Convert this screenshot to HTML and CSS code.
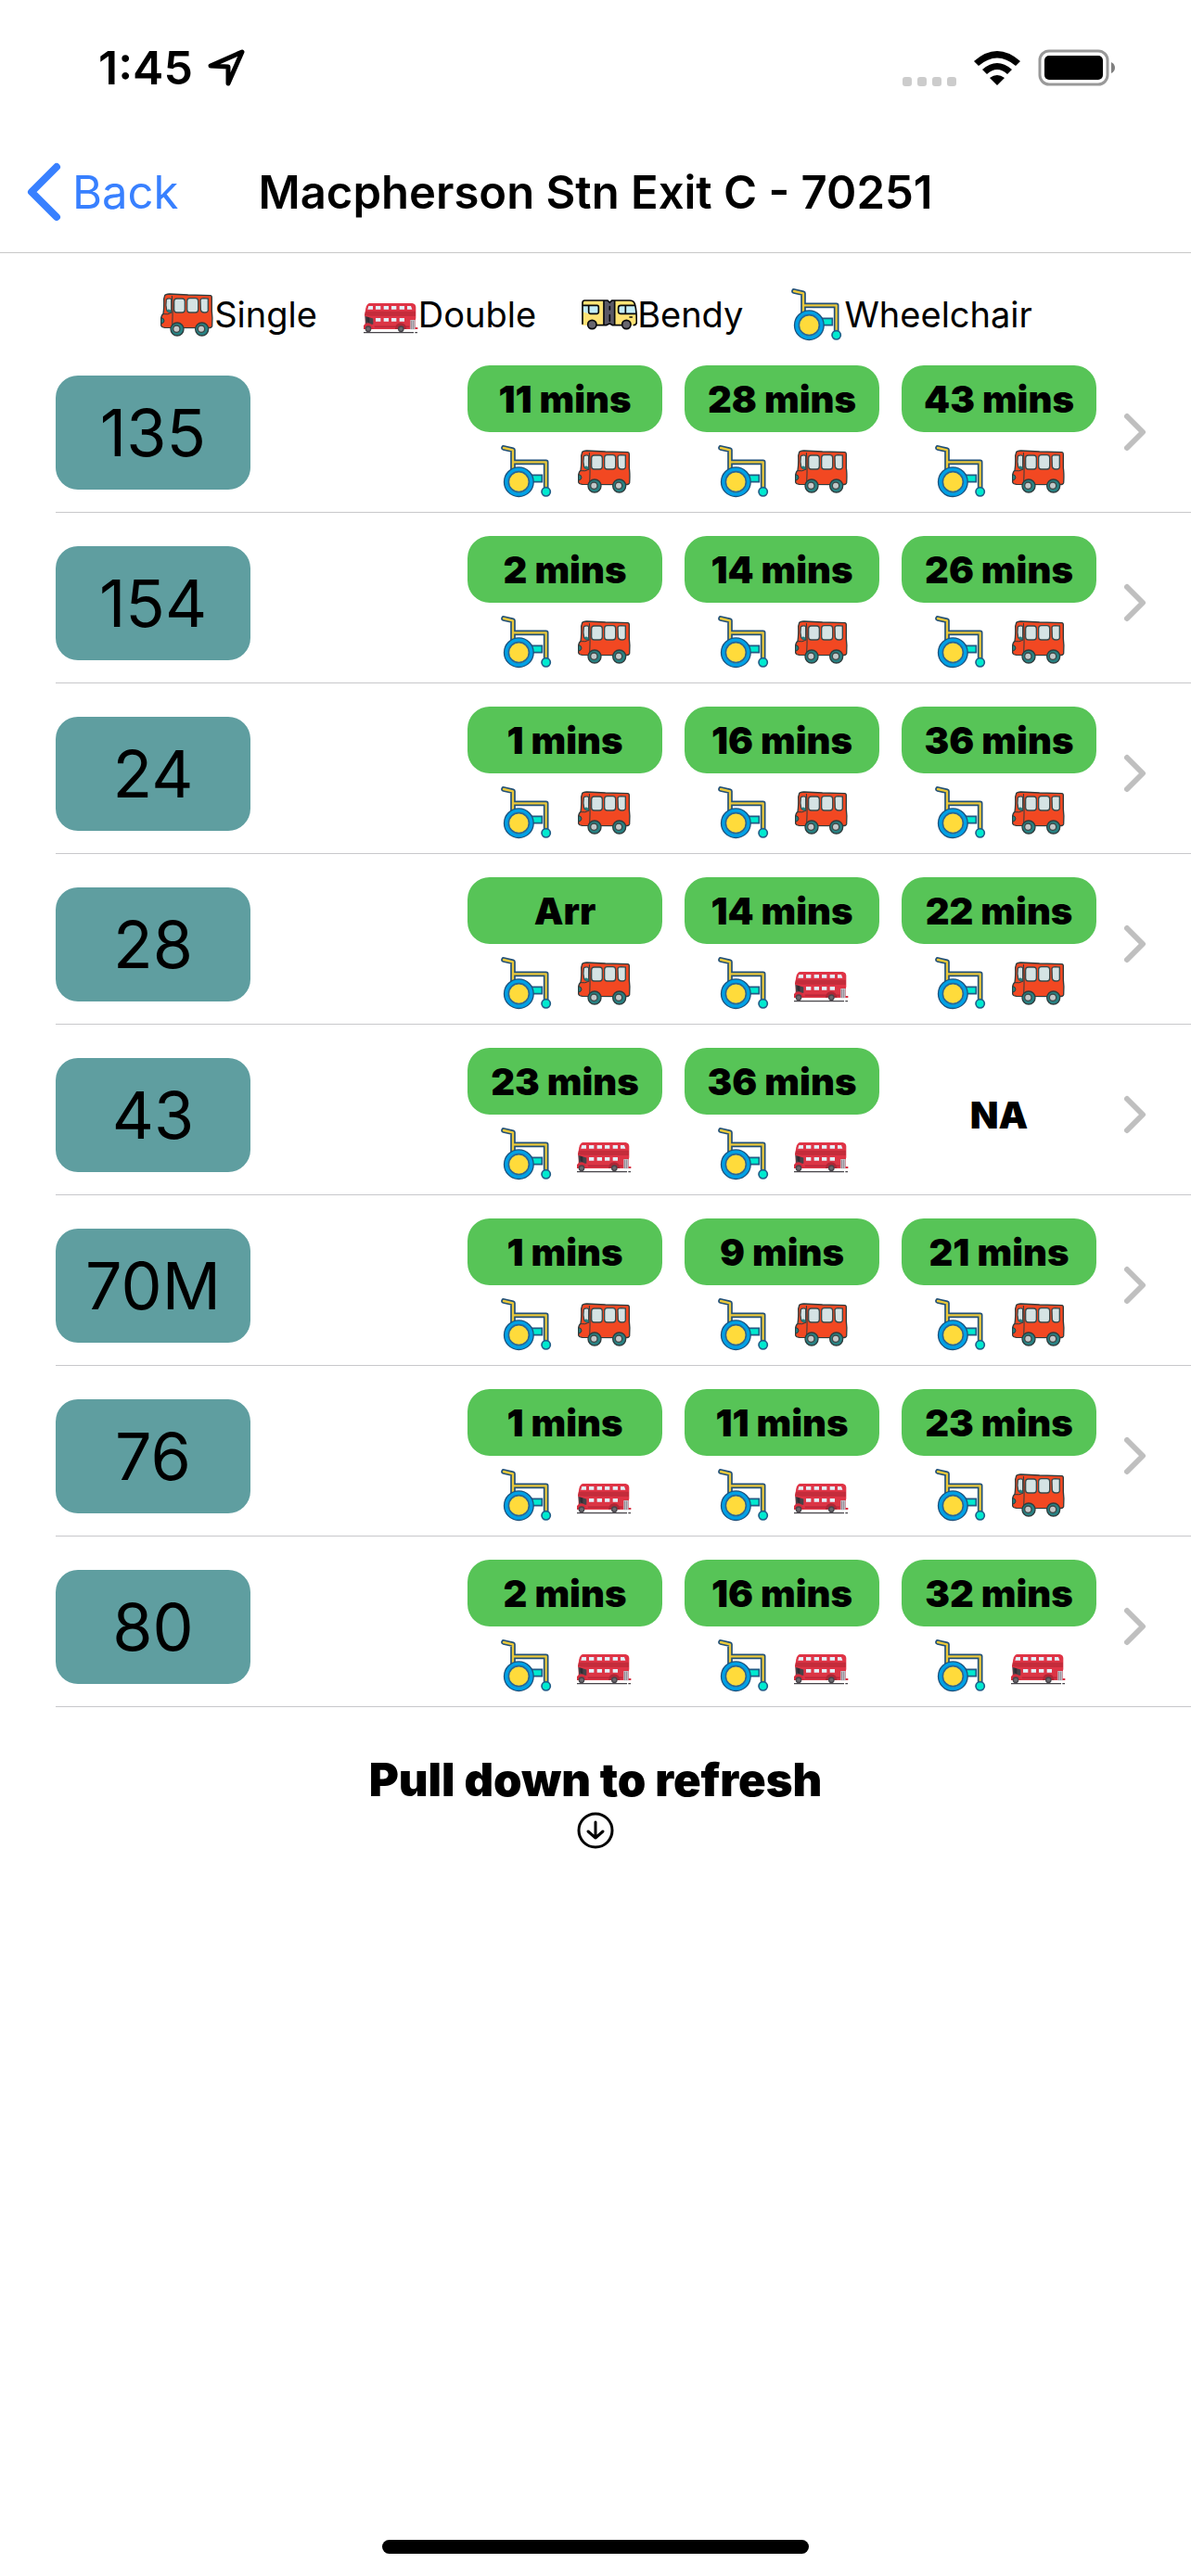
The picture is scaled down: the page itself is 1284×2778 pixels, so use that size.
FILE: index.html
```html
<!DOCTYPE html>
<html lang="en">
<head>
<meta charset="utf-8">
<meta name="viewport" content="width=device-width">
<title>Macpherson Stn Exit C - 70251</title>
<link rel="stylesheet" href="styles.css">
</head>
<body>
<svg class="sprite" aria-hidden="true">
  <symbol id="single" viewBox="0 0 180 180">
    <path d="M20 29Q22 25 35 24L95 27L168 29Q173 30 172 40L172 80Q175 100 173 128Q172 134 160 134L20 133Q9 132 8 126V104Q9 92 15 88Q18 70 17 40Z" fill="#f24822" stroke="#2f3c3d" stroke-width="4"/>
    <path d="M43 30Q47 60 44 132M15 89Q30 92 43 84" fill="none" stroke="#2f3c3d" stroke-width="3"/>
    <g fill="#d5e3e4" stroke="#39494a" stroke-width="4">
      <path d="M25 42Q32 36 41 40V82Q32 86 26 76Q22 60 25 42Z"/>
      <rect x="50" y="39" width="35" height="45" rx="9"/>
      <rect x="92" y="38" width="36" height="46" rx="9"/>
      <path d="M135 44Q136 38 146 38L160 39V78Q159 84 150 84Q137 85 136 74Z"/>
    </g>
    <path d="M27 76Q35 70 40 78V83H31Z" fill="#258080"/>
    <path d="M8 101Q18 102 18 111Q17 119 8 120Z" fill="#258080" stroke="#2f3c3d" stroke-width="3"/>
    <g fill="#278283" stroke="#2f3c3d" stroke-width="4"><circle cx="60" cy="138" r="21"/><circle cx="140" cy="138" r="21"/></g>
    <g fill="#c3c8c9" stroke="#3d4748" stroke-width="4"><circle cx="58" cy="137" r="11"/><circle cx="138" cy="137" r="11"/></g>
  </symbol>
  <symbol id="double" viewBox="0 0 180 180">
    <path d="M8 94H171V138H8Z" fill="#dc3545"/>
    <path d="M7 94H34V122H10Z" fill="#464248"/>
    <path d="M13 96H22V120L13 112Z" fill="#302d34"/>
    <path d="M22 54H160Q171 56 172 66V104H36L6 95L10 70Q13 56 22 54Z" fill="#df3446"/>
    <path d="M9 80H171V96L30 95L6 93Z" fill="#c42c3b"/>
    <path d="M10 119Q30 112 36 138H3V126Z" fill="#d52d3e"/>
    <path d="M154 108H170V139H154Z" fill="#c9c7cd"/>
    <path d="M158 110V138M164 110V138" stroke="#8c8790" stroke-width="3"/>
    <path d="M170 132H178V138H170Z" fill="#db3043"/>
    <path d="M38 130H151" stroke="#b92739" stroke-width="5"/>
    <g fill="#e4f1fc">
      <path d="M19 63H33V74H16ZM42 63H58V74H42ZM68 63H84V74H68ZM93 63H109V74H93ZM119 63H135V74H119ZM144 63H156L160 74H144Z"/>
      <path d="M42 102H58V113H42ZM68 102H84V113H68ZM93 102H109V113H93ZM119 102H135V113H119Z"/>
    </g>
    <path d="M105 138Q106 119 123 118Q140 119 142 138Z" fill="#ae2635"/>
    <g fill="#6b696e" stroke="#48454b" stroke-width="4"><circle cx="18" cy="137" r="8"/><circle cx="124" cy="137" r="8"/></g>
    <path d="M3 149H165M169 149H177" stroke="#47454a" stroke-width="4"/>
  </symbol>
  <symbol id="bendy" viewBox="0 0 180 180">
    <path d="M2 53Q2 45 10 45H72V125H2Z" fill="#ffe375"/>
    <path d="M107 45H155Q169 45 173 57Q178 75 178 116Q178 125 168 125H107Z" fill="#ffe375"/>
    <path d="M71 45H84L92 52L98 45H108V125H98L89 119L82 125H71Z" fill="#5b5966"/>
    <path d="M3 61H51Q55 61 55 67V84Q55 88 50 88H23L3 82Z" fill="#c4eef8"/>
    <path d="M119 67Q119 61 126 61H172L176 88H126Q119 88 119 81Z" fill="#c4eef8"/>
    <path d="M3 121V53Q3 45 10 45H84L91 52L98 45H155Q168 45 172 56Q178 76 178 115Q178 124 169 125M49 125H80L90 120M92 120L100 125H128M72 46V124M107 46V124M91 65V75M91 92V112" fill="none" stroke="#08090b" stroke-width="5" stroke-linecap="round"/>
    <path d="M5 61H50Q55 61 55 67V82Q55 88 49 88H29Q23 88 23 82V62M172 61H127Q119 61 119 68V81Q119 88 127 88H175M142 62V87M156 99H163" fill="none" stroke="#08090b" stroke-width="5" stroke-linecap="round"/>
    <g fill="#68666f" stroke="#08090b" stroke-width="5"><circle cx="34" cy="123" r="14"/><circle cx="145" cy="123" r="14"/></g>
  </symbol>
  <symbol id="wheelchair" viewBox="0 0 180 180">
    <path d="M100 103H142V125H100Z" fill="#00ead0" stroke="#215b85" stroke-width="5"/>
    <path d="M18 15L48 22V84M48 61H155V148" fill="none" stroke="#225077" stroke-width="17" stroke-linecap="round" stroke-linejoin="round"/>
    <path d="M18 15L48 22V84M48 61H155V148" fill="none" stroke="#eac83b" stroke-width="7" stroke-linecap="round" stroke-linejoin="round"/>
    <circle cx="67" cy="125" r="40" fill="none" stroke="#1d527d" stroke-width="19"/>
    <circle cx="67" cy="125" r="40" fill="#ffd93b" stroke="#00a1e6" stroke-width="11"/>
    <circle cx="67" cy="125" r="33" fill="#ffdb3b" stroke="#24669a" stroke-width="5"/>
    <circle cx="155" cy="157" r="14" fill="#00ead0" stroke="#215f89" stroke-width="5"/>
  </symbol>
  <symbol id="chevron" viewBox="0 0 24 42"><path d="M3 4L20 21L3 38" fill="none" stroke="currentColor" stroke-width="6" stroke-linecap="round" stroke-linejoin="round"/></symbol>
</svg>

<header class="header">
  <div class="status">
    <div class="status-left">
      <time>1:45</time>
      <svg class="location" viewBox="0 0 40 40" aria-hidden="true"><path d="M3 18L37 3L22 37V19Z" fill="none" stroke="#000" stroke-width="5" stroke-linejoin="round"/></svg>
    </div>
    <div class="status-right">
      <svg class="signal" viewBox="0 0 58 10" aria-hidden="true"><g fill="#ccc"><rect width="10" height="10" rx="3"/><rect x="16" width="10" height="10" rx="3"/><rect x="32" width="10" height="10" rx="3"/><rect x="48" width="10" height="10" rx="3"/></g></svg>
      <svg class="wifi" viewBox="0 0 52 38" aria-hidden="true"><path d="M1 11Q26 -11 51 11L46 16Q26 -1 6 16ZM10 20Q26 6 42 20L37 25Q26 15 15 25ZM18 29Q26 23 34 29L26 37Z" fill="#000"/></svg>
      <svg class="battery" viewBox="0 0 84 40" aria-hidden="true"><rect x="2" y="2" width="73" height="36" rx="10" fill="none" stroke="#999" stroke-width="3"/><rect x="7" y="7" width="63" height="26" rx="5"/><path d="M79 14Q83 16 83 20T79 26Z" fill="#808080"/></svg>
    </div>
  </div>
  <nav class="nav">
    <a class="back" href="#"><svg viewBox="0 0 38 64" aria-hidden="true"><path d="M33 5L6 32L33 59" fill="none" stroke="currentColor" stroke-width="8" stroke-linecap="round" stroke-linejoin="round"/></svg>Back</a>
    <h1>Macpherson Stn Exit C - 70251</h1>
  </nav>
</header>

<main>
  <ul class="legend">
    <li><svg class="icon"><use href="#single"/></svg>Single</li>
    <li><svg class="icon"><use href="#double"/></svg>Double</li>
    <li><svg class="icon"><use href="#bendy"/></svg>Bendy</li>
    <li><svg class="icon"><use href="#wheelchair"/></svg>Wheelchair</li>
  </ul>
  <ul class="services" id="services"></ul>
  <section class="refresh">
    <p>Pull down to refresh</p>
    <svg viewBox="0 0 40 40" aria-hidden="true"><g fill="none" stroke="#000" stroke-width="3" stroke-linecap="round" stroke-linejoin="round"><circle cx="20" cy="20" r="18"/><path d="M20 11V28M12 21L20 28L28 21"/></g></svg>
  </section>
</main>
<div class="home-indicator"></div>
<script src="services.js"></script>
</body>
</html>
```
FILE: styles.css
```css
* { box-sizing: border-box; }

body {
  margin: 0;
  min-height: 100vh;
  display: flex;
  flex-direction: column;
  background: #fff;
  color: #000;
  font-family: Inter, "Liberation Sans", sans-serif;
}

ul { list-style: none; margin: 0; padding: 0; }
a { color: inherit; text-decoration: none; }
svg { display: block; flex: none; }
.sprite { position: absolute; width: 0; height: 0; }

.header { border-bottom: 1px solid #c8c8c8; }

.status {
  height: 142px;
  padding: 4px 81px 0 106px;
  display: flex;
  align-items: center;
  justify-content: space-between;
}
.status-left { display: flex; align-items: center; gap: 16px; font-size: 50px; font-weight: 600; }
.location { width: 40px; height: 40px; }
.status-right { display: flex; align-items: flex-end; gap: 18px; }
.signal { width: 58px; height: 10px; }
.wifi { width: 52px; height: 38px; }
.battery { width: 84px; height: 40px; }

.nav {
  height: 130px;
  padding: 0 28px;
  display: grid;
  grid-template-columns: 1fr auto 1fr;
  align-items: center;
}
.back { display: flex; align-items: center; gap: 12px; font-size: 49px; color: #3880ff; }
.back svg { width: 38px; height: 64px; }
h1 { margin: 0; font-size: 49px; font-weight: 600; white-space: nowrap; }

.legend {
  padding-top: 36px;
  display: flex;
  justify-content: center;
  gap: 49px;
  font-size: 38px;
}
.legend li { display: flex; align-items: center; }
.icon { width: 60px; height: 60px; }

.services li { margin-left: 60px; border-bottom: 1px solid #c8c8cb; }
.service {
  padding: 25px 48px 14px 0;
  display: flex;
  align-items: center;
}
.number {
  width: 210px;
  height: 123px;
  margin-right: auto;
  display: flex;
  align-items: center;
  justify-content: center;
  border-radius: 24px;
  background: #5f9ea0;
  font-size: 70px;
}
.arrivals { display: grid; grid-template-columns: repeat(3, 210px); gap: 24px; align-items: center; }
.arrival { display: grid; gap: 12px; }
.time {
  height: 72px;
  display: flex;
  align-items: center;
  justify-content: center;
  border-radius: 24px;
  background: #57c457;
  font-size: 40px;
  font-weight: 900;
}
.time.none { background: none; }
.features { display: flex; justify-content: center; gap: 24px; }
.chevron { width: 24px; height: 42px; margin-left: 30px; color: #bfbfbf; }

.refresh { padding-top: 47px; display: flex; flex-direction: column; align-items: center; gap: 2px; }
.refresh p { margin: 0; font-size: 49px; line-height: 64px; font-weight: 900; }
.refresh svg { width: 40px; height: 40px; }

.home-indicator {
  width: 460px;
  height: 15px;
  margin: auto auto 24px;
  border-radius: 8px;
  background: #000;
}
```
FILE: services.js
```js
const services = [
  ["135", ["11 mins", "single"], ["28 mins", "single"], ["43 mins", "single"]],
  ["154", ["2 mins", "single"], ["14 mins", "single"], ["26 mins", "single"]],
  ["24", ["1 mins", "single"], ["16 mins", "single"], ["36 mins", "single"]],
  ["28", ["Arr", "single"], ["14 mins", "double"], ["22 mins", "single"]],
  ["43", ["23 mins", "double"], ["36 mins", "double"], null],
  ["70M", ["1 mins", "single"], ["9 mins", "single"], ["21 mins", "single"]],
  ["76", ["1 mins", "double"], ["11 mins", "double"], ["23 mins", "single"]],
  ["80", ["2 mins", "double"], ["16 mins", "double"], ["32 mins", "double"]],
];

const icon = (name) => `<svg class="icon"><use href="#${name}"/></svg>`;

const arrival = (bus) => bus
  ? `<div class="arrival"><span class="time">${bus[0]}</span><div class="features">${icon("wheelchair")}${icon(bus[1])}</div></div>`
  : `<div class="arrival"><span class="time none">NA</span></div>`;

document.getElementById("services").innerHTML = services.map(([number, ...buses]) => `
  <li><a class="service" href="#">
    <span class="number">${number}</span>
    <div class="arrivals">${buses.map(arrival).join("")}</div>
    <svg class="chevron"><use href="#chevron"/></svg>
  </a></li>`).join("");
```
